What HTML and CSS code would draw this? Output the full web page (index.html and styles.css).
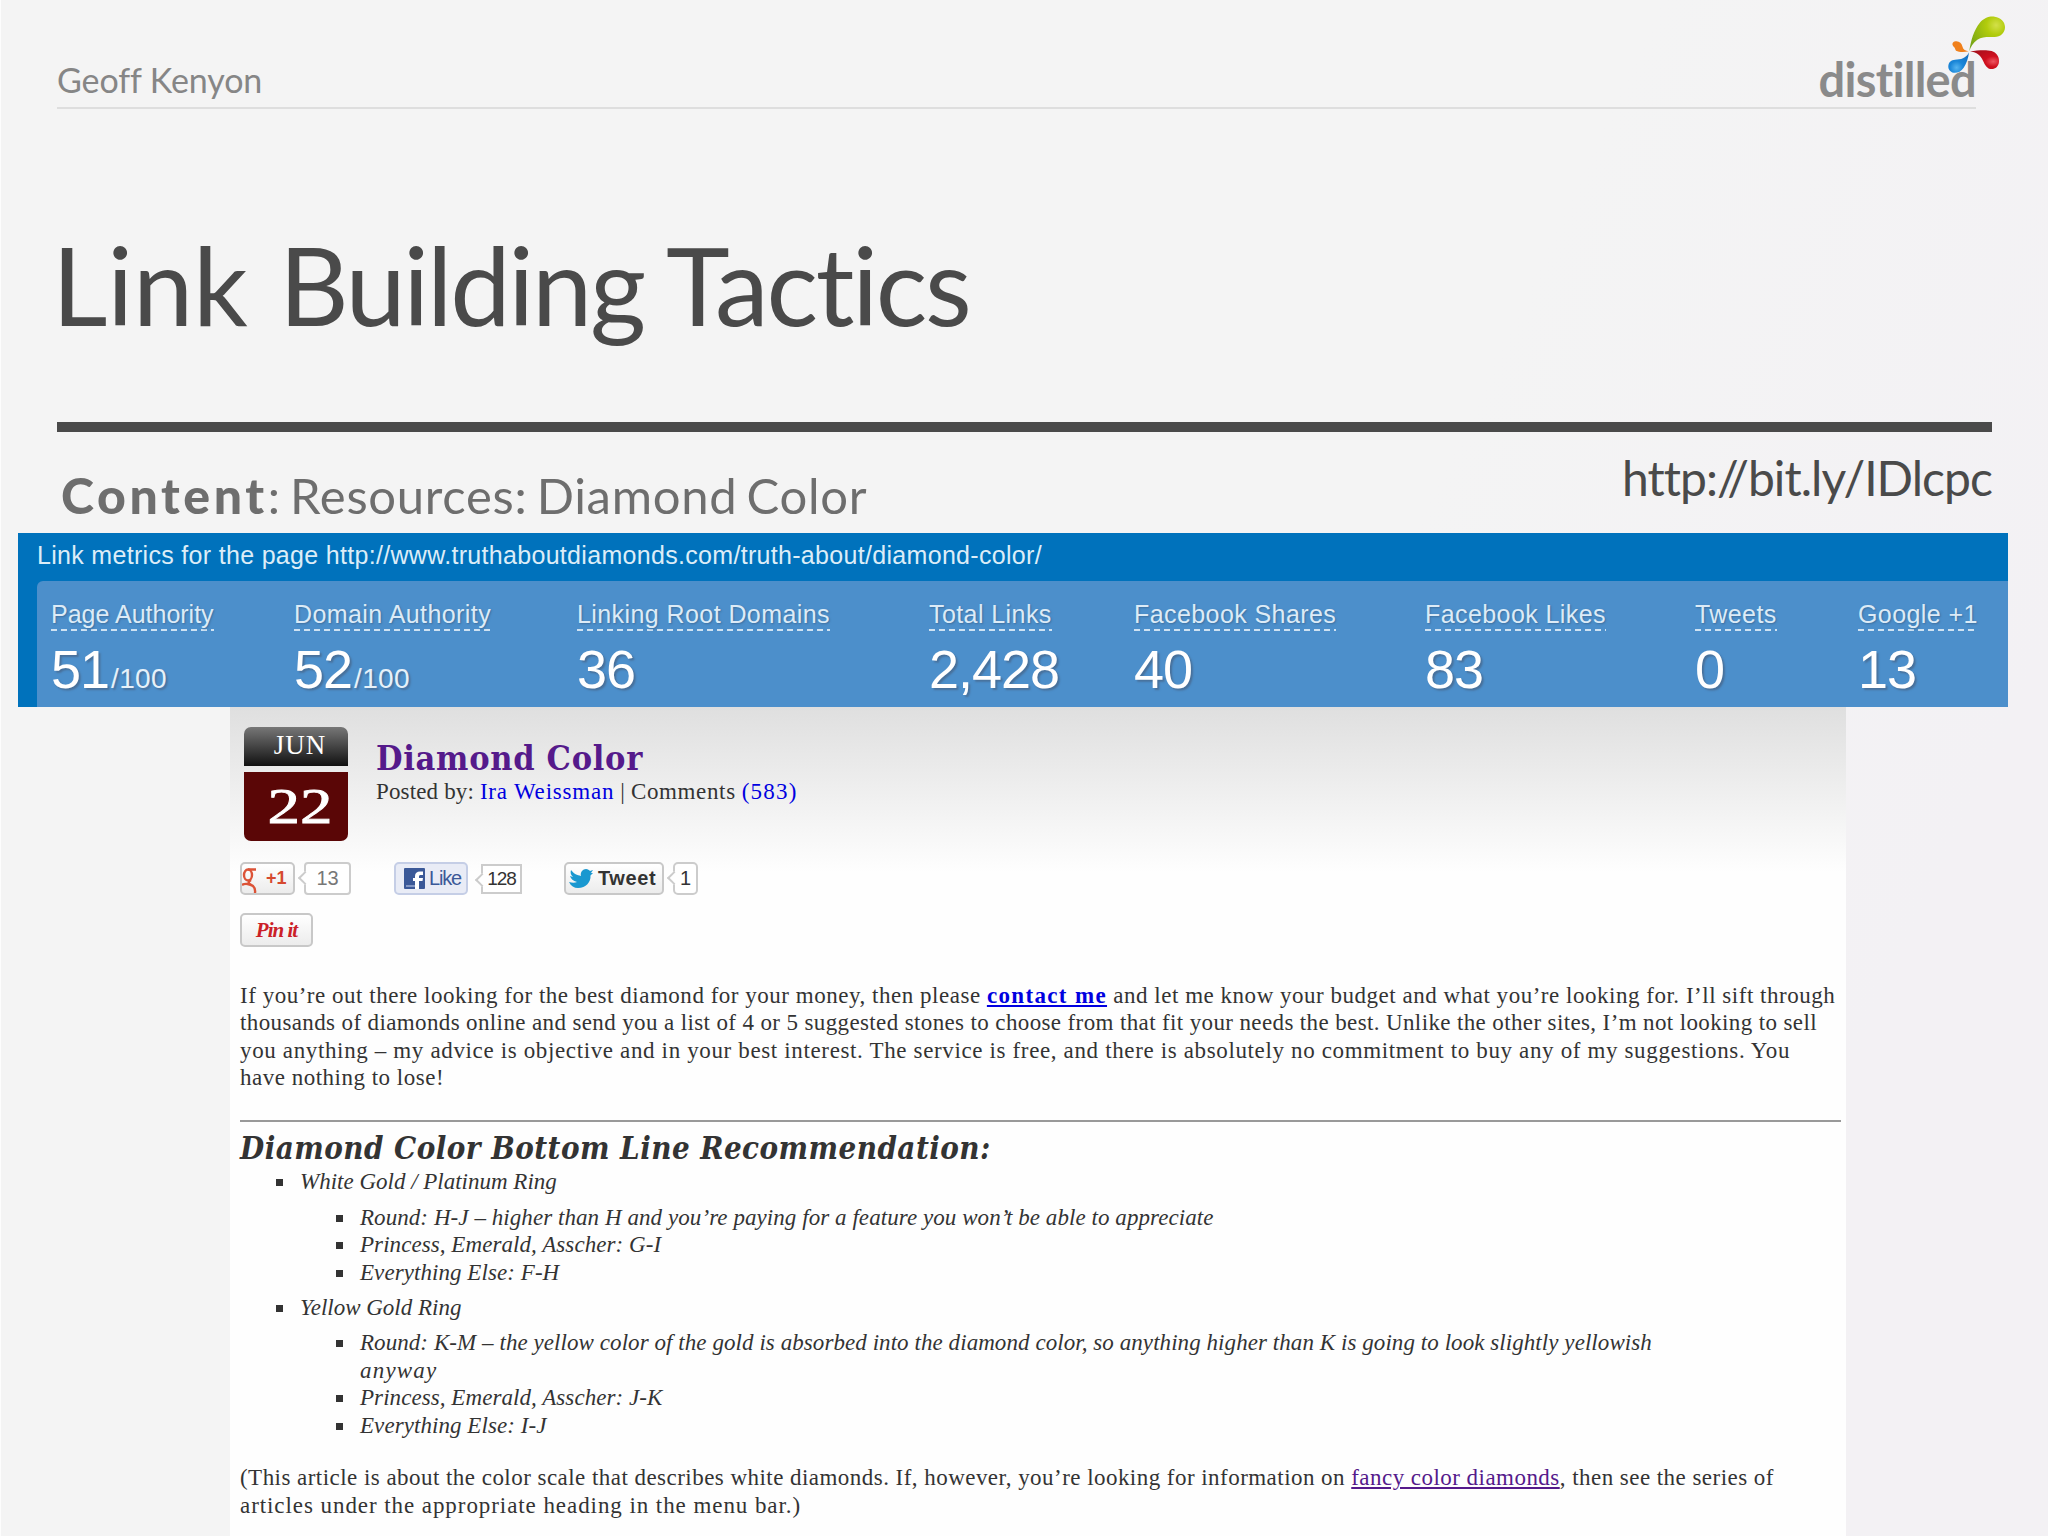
FILE: index.html
```html
<!DOCTYPE html>
<html lang="en">
<head>
  <meta charset="utf-8">
  <title>Link Building Tactics</title>
  <link rel="stylesheet" href="styles.css">
</head>
<body>
  <div class="slide">
    <header class="top">
      <span class="author">Geoff Kenyon</span>
      <div class="logo">distilled
        <svg class="drops" viewBox="440 40 180 180">
          <defs>
            <radialGradient id="green" cx="0.75" cy="0.25" r="0.9"><stop offset="0" stop-color="#d3e04a"/><stop offset="0.3" stop-color="#b2cc0c"/><stop offset="1" stop-color="#74a317"/></radialGradient>
            <radialGradient id="red" cx="0.8" cy="0.6" r="0.8"><stop offset="0" stop-color="#ee5560"/><stop offset="0.35" stop-color="#cf0f1e"/><stop offset="1" stop-color="#a80f1b"/></radialGradient>
            <radialGradient id="blue" cx="0.4" cy="0.75" r="0.8"><stop offset="0" stop-color="#55b4f0"/><stop offset="0.4" stop-color="#1a86d8"/><stop offset="1" stop-color="#1470c0"/></radialGradient>
          </defs>
          <path fill="url(#green)" d="M510 152C514 120 524 88 541 67C554 51 571 46 586 48C604 50 617 63 617 79C617 97 603 109 586 109C569 109 549 107 534 117C521 126 514 138 510 152Z"/>
          <path fill="url(#red)" d="M512 152C535 149 560 147 577 151C591 155 600 168 599 183C598 197 588 205 577 205C563 205 557 193 551 180C543 162 530 155 512 152Z"/>
          <path fill="url(#blue)" d="M509 155C507 172 502 188 493 201C485 213 474 217 463 216C452 214 446 205 447 195C448 184 456 178 467 177C484 177 500 174 509 155Z"/>
          <path fill="#f0801c" d="M508 152C495 155 479 155 470 150C466 145 469 142 463 138C457 132 458 124 469 122C480 121 487 128 489 137C491 147 499 151 508 152Z"/>
        </svg>
      </div>
    </header>

    <h1><span class="first-word">Link</span> Building Tactics</h1>
    <div class="rule"></div>

    <div class="subhead">
      <div class="topic"><b>Content</b>: Resources: Diamond Color</div>
      <div class="short-url">http://bit.ly/IDlcpc</div>
    </div>

    <section class="metrics">
      <div class="metrics-title">Link metrics for the page http://www.truthaboutdiamonds.com/truth-about/diamond-color/</div>
      <div class="metrics-row">
        <div><span class="label tight">Page Authority</span><div class="value">51<small>/100</small></div></div>
        <div><span class="label">Domain Authority</span><div class="value">52<small>/100</small></div></div>
        <div><span class="label">Linking Root Domains</span><div class="value">36</div></div>
        <div><span class="label">Total Links</span><div class="value">2,428</div></div>
        <div><span class="label">Facebook Shares</span><div class="value">40</div></div>
        <div><span class="label">Facebook Likes</span><div class="value">83</div></div>
        <div><span class="label">Tweets</span><div class="value">0</div></div>
        <div><span class="label">Google +1</span><div class="value">13</div></div>
      </div>
    </section>

    <article class="post">
      <div class="post-head">
        <div class="date">
          <div class="month">JUN</div>
          <div class="day"><span>22</span></div>
        </div>
        <div>
          <h2>Diamond Color</h2>
          <p class="meta">Posted by: <a href="#">Ira Weissman</a> | <span>Comments</span> <a href="#">(583)</a></p>
        </div>
      </div>

      <div class="share">
        <span class="btn gplus">
          <svg width="16" height="25" viewBox="0 0 16 25"><g fill="none" stroke="#dc5337" stroke-width="2.400"><ellipse cx="6" cy="7" rx="4" ry="5.500"/><path d="M6 1.500H14M9 12C4 15 8 16 11 18C14 21 13 24 13 25M0 17C3 15 8 16 11 18"/></g></svg>
          <b>+1</b></span><span class="count gcount">13</span>
        <span class="btn like">
          <svg width="21" height="21" viewBox="0 0 21 21"><rect width="21" height="21" rx="1" fill="#3b5998"/><rect x="2" y="17" width="9" height="2" fill="#8397c4"/><path d="M11 21V13H9V10H11V8C11 5 13 3.500 16 3.500H19V7H17C15.500 7 15 7.500 15 8.500V10H19L18.500 13H15V21Z" fill="#fff"/></svg>
          Like</span><span class="count lcount">128</span>
        <span class="btn tweet">
          <svg width="24" height="19" viewBox="0 0 24 19"><path fill="#1a98d0" d="M0 13C3 14 6 14 8 13C4 12 2 10 1 7L4 8C2 6 1 4 2 1C5 5 8 6 12 7C11 3 14 0 17 0C19 0 20 1 21 2L24 1L22 4L24 4L21.500 6.500C22 13 17 19 9 19C5 19 2 17 0 13Z"/></svg>
          Tweet</span><span class="count tcount">1</span>
      </div>
      <span class="btn pin">Pin it</span>

      <p class="intro">
        <span>If you’re out there looking for the best diamond for your money, then please <a href="#"><b>contact me</b></a> and let me know your budget and what you’re looking for. I’ll sift through</span><br>
        <span>thousands of diamonds online and send you a list of 4 or 5 suggested stones to choose from that fit your needs the best. Unlike the other sites, I’m not looking to sell</span><br>
        <span>you anything – my advice is objective and in your best interest. The service is free, and there is absolutely no commitment to buy any of my suggestions. You</span><br>
        <span>have nothing to lose!</span>
      </p>
      <hr>
      <h3>Diamond Color Bottom Line Recommendation:</h3>
      <ul>
        <li>White Gold / Platinum Ring
          <ul>
            <li>Round: H-J – higher than H and you’re paying for a feature you won’t be able to appreciate</li>
            <li>Princess, Emerald, Asscher: G-I</li>
            <li>Everything Else: F-H</li>
          </ul>
        </li>
        <li>Yellow Gold Ring
          <ul>
            <li>Round: K-M – the yellow color of the gold is absorbed into the diamond color, so anything higher than K is going to look slightly yellowish<br><span class="wide">anyway</span></li>
            <li>Princess, Emerald, Asscher: J-K</li>
            <li>Everything Else: I-J</li>
          </ul>
        </li>
      </ul>
      <p class="outro">
        <span>(This article is about the color scale that describes white diamonds. If, however, you’re looking for information on <a class="visited" href="#">fancy color diamonds</a>, then see the series of</span><br>
        <span>articles under the appropriate heading in the menu bar.)</span>
      </p>
    </article>
  </div>
</body>
</html>
```
FILE: styles.css
```css
* {
  box-sizing: border-box;
}

body {
  margin: 0;
  background: #f4f4f4;
  font-family: Lato, sans-serif;
}

.slide {
  width: 2048px;
  height: 1536px;
  display: flex;
  flex-direction: column;
  overflow: hidden;
  border-left: 1px solid #fdfdfd;
  background: linear-gradient(115deg, #f4f4f4 60%, #f3f1f4 85%);
}

.top {
  height: 109px;
  margin: 0 72px 0 56px;
  padding-top: 49px;
  display: flex;
  justify-content: space-between;
  border-bottom: 2px solid #dedede;
  line-height: 61px;
}

.author {
  font-size: 34px;
  letter-spacing: -0.1px;
  color: #868686;
}

.logo {
  position: relative;
  font-size: 47px;
  font-weight: bold;
  letter-spacing: -0.7px;
  color: #8a8a8a;
}

.drops {
  position: absolute;
  width: 60px;
  height: 60px;
  right: -30px;
  top: -35px;
}

h1 {
  margin: 110px 0 0 51px;
  font-size: 108px;
  line-height: 131px;
  font-weight: normal;
  letter-spacing: -2.3px;
  color: #4a4a4a;
}

.first-word {
  margin-right: 6px;
  letter-spacing: -0.2px;
}

.rule {
  margin: 72px 56px 0;
  height: 10px;
  background: #4a4a4a;
}

.subhead {
  height: 101px;
  margin: 0 56px 0 60px;
  display: flex;
  justify-content: space-between;
  line-height: 60px;
}

.topic {
  padding-top: 33px;
  font-size: 49px;
  letter-spacing: 0.7px;
  word-spacing: -4px;
  color: #6e6e6e;
}

.topic b {
  font-size: 50px;
  font-weight: 900;
  letter-spacing: 3.6px;
}

.short-url {
  padding-top: 16px;
  font-size: 48px;
  letter-spacing: -0.95px;
  color: #4a4a4a;
}

.metrics {
  height: 174px;
  margin: 0 40px 0 17px;
  padding-left: 19px;
  background: #0072bc;
  color: #fff;
  font-family: "Liberation Sans", sans-serif;
}

.metrics-title {
  height: 48px;
  font-size: 25px;
  line-height: 45px;
  letter-spacing: 0.31px;
  color: #dcedf8;
}

.metrics-row {
  height: 126px;
  padding: 18px 0 0 14px;
  display: grid;
  grid-template-columns: 243px 283px 352px 205px 291px 270px 163px 1fr;
  background: #4c8fcb;
  border-top-left-radius: 6px;
}

.label {
  display: inline-block;
  height: 32px;
  font-size: 25px;
  line-height: 30px;
  letter-spacing: 0.42px;
  white-space: nowrap;
  color: #dcebf7;
  text-shadow: 1px 1px 2px #3d6f9f;
  background: repeating-linear-gradient(90deg, #cfe2f2 0 6px, transparent 6px 10px) left bottom / 100% 2px no-repeat;
}

.label.tight {
  letter-spacing: 0;
}

.value {
  margin-top: 8px;
  font-size: 54px;
  line-height: 60px;
  letter-spacing: -1px;
  text-shadow: 2px 2px 2px #48709a;
}

.value small {
  margin-left: 2px;
  font-size: 28px;
  letter-spacing: 0.3px;
  color: #e6f1f9;
}

.post {
  flex: 1;
  margin: 0 202px 0 229px;
  padding: 20px 5px 0 10px;
  background: linear-gradient(#dfdfdf, #fefefe 165px);
  color: #333;
  font: 23px/27.5px "Liberation Serif", serif;
  white-space: nowrap;
}

.post a {
  color: #0000e0;
}

.post a.visited {
  color: #551a8b;
}

.post-head {
  display: flex;
  gap: 28px;
  padding-left: 4px;
  height: 114px;
}

.date {
  width: 104px;
  color: #fff;
  text-align: center;
}

.month {
  height: 39px;
  padding-left: 8px;
  border-radius: 7px 7px 0 0;
  background: linear-gradient(#777, #111);
  font-size: 27px;
  line-height: 36px;
  letter-spacing: 1px;
}

.day {
  height: 69px;
  margin-top: 6px;
  padding-left: 8px;
  border-radius: 0 0 7px 7px;
  background: #5a0606;
  font-size: 50px;
  line-height: 69px;
}

.day span {
  display: inline-block;
  transform: scaleX(1.3);
  -webkit-text-stroke: 0.8px #fff;
}

h2,
h3 {
  font-family: "DejaVu Serif Condensed", "DejaVu Serif", serif;
  font-stretch: condensed;
}

h2 {
  margin: 11px 0 0;
  font-size: 34px;
  line-height: 40px;
  letter-spacing: 0.7px;
  color: #551a8b;
}

.meta {
  margin: 0;
  letter-spacing: 0.15px;
}

.meta span {
  letter-spacing: 0.65px;
}

.post .meta a {
  letter-spacing: 0.8px;
  text-decoration: none;
}

.post .meta a:last-child {
  letter-spacing: 1.2px;
}

.share {
  display: flex;
  height: 33px;
  margin-top: 21px;
}

.btn {
  display: flex;
  align-items: center;
  border: 2px solid #c8c8c8;
  border-radius: 5px;
  background: linear-gradient(#fff, #ececec);
}

.count {
  position: relative;
  display: flex;
  align-items: center;
  justify-content: center;
  border: 2px solid #ccc;
  background: #fff;
  font: 20px "Liberation Sans", sans-serif;
}

/* little arrow on the left edge of a counter */
.count::before {
  content: "";
  position: absolute;
  left: -6px;
  top: 9px;
  width: 8px;
  height: 8px;
  border-left: 2px solid #ccc;
  border-bottom: 2px solid #ccc;
  background: #fff;
  transform: rotate(45deg);
}

.gplus {
  width: 55px;
  gap: 8px;
  color: #d6492f;
  font: 18px "Liberation Sans", sans-serif;
}

.gplus svg {
  margin-top: 4px;
}

.gcount {
  width: 47px;
  margin-left: 9px;
  border-radius: 4px;
  color: #777;
}

.like {
  width: 74px;
  margin-left: 43px;
  padding-left: 8px;
  gap: 4px;
  border-color: #c5cee6;
  background: #e9ecf6;
  color: #3b5998;
  font: 20px "Liberation Sans", sans-serif;
  letter-spacing: -1.2px;
}

.lcount {
  width: 41px;
  height: 30px;
  margin: 2px 0 0 13px;
  font-size: 19px;
  letter-spacing: -1px;
}

.tweet {
  width: 100px;
  margin-left: 42px;
  padding-left: 3px;
  gap: 5px;
  font: bold 20px "Liberation Sans", sans-serif;
  letter-spacing: 0.6px;
}

.tcount {
  width: 25px;
  margin-left: 9px;
  border-radius: 5px;
}

.pin {
  width: 73px;
  height: 34px;
  margin-top: 18px;
  justify-content: center;
  color: #cb2027;
  font: italic bold 21px "Liberation Serif", serif;
  letter-spacing: -1px;
}

.intro {
  margin: 34.5px 0 28.5px;
}

/* each line is tracked out to the same measure */
.intro span:nth-of-type(1) { letter-spacing: 0.52px; }
.intro span:nth-of-type(2) { letter-spacing: 0.375px; }
.intro span:nth-of-type(3) { letter-spacing: 0.64px; }
.intro span:nth-of-type(4) { letter-spacing: 0.5px; }

.intro b {
  letter-spacing: 1.35px;
}

hr {
  height: 2px;
  margin: 0;
  border: 0;
  background: #999;
}

h3 {
  margin: 7px 0 0;
  font-size: 31px;
  line-height: 38px;
  letter-spacing: 0.45px;
  font-style: italic;
}

.post ul {
  margin: 1px 0 0;
  padding-left: 56px;
  list-style: square;
  font-style: italic;
}

.post ul ul {
  margin: 8px 0 7.500px;
  letter-spacing: 0.065px;
}

.post li {
  padding-left: 4px;
}

.wide {
  letter-spacing: 1.2px;
}

.outro {
  margin: 25px 0 0;
}

.outro span:nth-of-type(1) { letter-spacing: 0.46px; }
.outro span:nth-of-type(2) { letter-spacing: 0.93px; }
```
